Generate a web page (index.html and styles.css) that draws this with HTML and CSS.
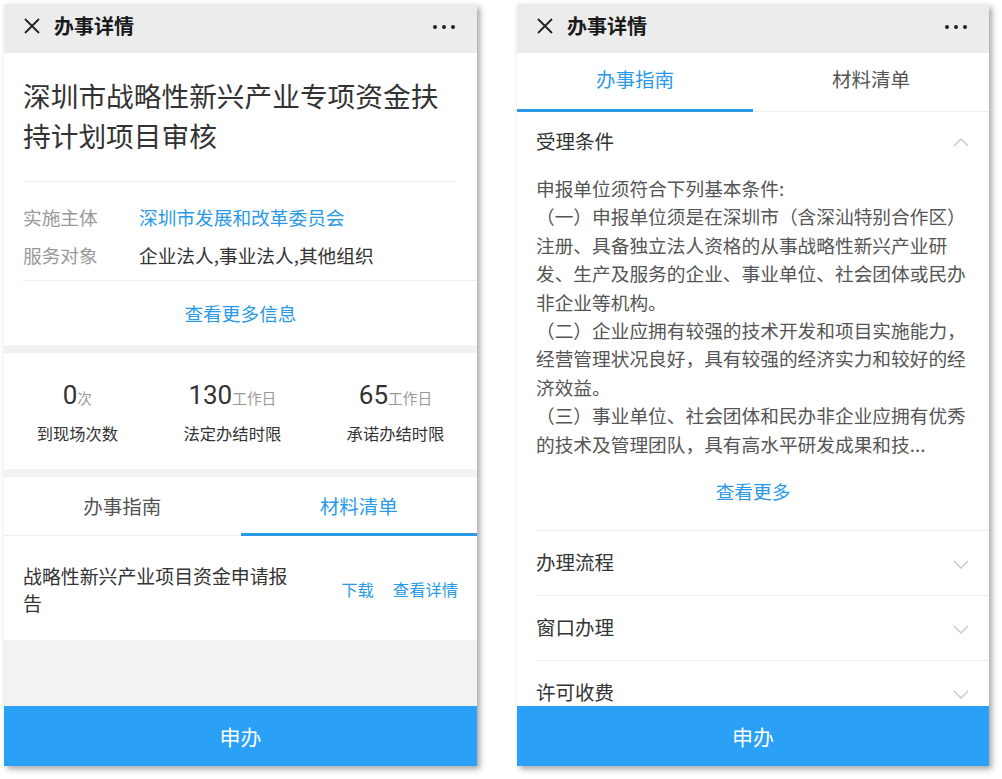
FILE: index.html
```html
<!DOCTYPE html>
<html lang="zh-CN">
<head>
  <meta charset="UTF-8">
  <title>办事详情</title>
  <link rel="stylesheet" href="styles.css">
</head>
<body>
  <div class="screens">

    <!-- Left screen: overview + material list -->
    <div class="phone">
      <header class="topbar">
        <svg class="close-icon" width="16" height="16" viewBox="0 0 16 16"><path d="M1 1 L15 15 M15 1 L1 15" stroke="#222" stroke-width="1.8" fill="none"/></svg>
        <span class="topbar-title">办事详情</span>
        <span class="more-dots"><i></i><i></i><i></i></span>
      </header>

      <div class="content">
        <section class="card">
          <h1 class="item-title">深圳市战略性新兴产业专项资金扶持计划项目审核</h1>
          <div class="info">
            <div class="info-row">
              <span class="info-label">实施主体</span>
              <span class="info-value blue">深圳市发展和改革委员会</span>
            </div>
            <div class="info-row">
              <span class="info-label">服务对象</span>
              <span class="info-value">企业法人,事业法人,其他组织</span>
            </div>
          </div>
          <a class="more-info">查看更多信息</a>
        </section>

        <section class="card stats">
          <div class="stat">
            <div class="stat-num">0<small>次</small></div>
            <div class="stat-label">到现场次数</div>
          </div>
          <div class="stat">
            <div class="stat-num">130<small>工作日</small></div>
            <div class="stat-label">法定办结时限</div>
          </div>
          <div class="stat">
            <div class="stat-num">65<small>工作日</small></div>
            <div class="stat-label">承诺办结时限</div>
          </div>
        </section>

        <section class="card">
          <nav class="tabs">
            <a class="tab">办事指南</a>
            <a class="tab active">材料清单</a>
          </nav>
          <div class="material">
            <span class="material-name">战略性新兴产业项目资金申请报告</span>
            <span class="material-actions">
              <a class="link">下载</a>
              <a class="link">查看详情</a>
            </span>
          </div>
        </section>
      </div>

      <button class="apply-btn">申办</button>
    </div>

    <!-- Right screen: guide -->
    <div class="phone">
      <header class="topbar">
        <svg class="close-icon" width="16" height="16" viewBox="0 0 16 16"><path d="M1 1 L15 15 M15 1 L1 15" stroke="#222" stroke-width="1.8" fill="none"/></svg>
        <span class="topbar-title">办事详情</span>
        <span class="more-dots"><i></i><i></i><i></i></span>
      </header>

      <div class="content white">
        <nav class="tabs">
          <a class="tab active">办事指南</a>
          <a class="tab">材料清单</a>
        </nav>

        <div class="guide open">
          <div class="guide-head">
            <span>受理条件</span>
            <svg class="chevron" width="16" height="10" viewBox="0 0 16 10"><path d="M1 9 L8 2 L15 9" stroke="#c8c8c8" stroke-width="1.4" fill="none"/></svg>
          </div>
          <div class="guide-body">
            <p>申报单位须符合下列基本条件:</p>
            <p>（一）申报单位须是在深圳市（含深汕特别合作区）注册、具备独立法人资格的从事战略性新兴产业研发、生产及服务的企业、事业单位、社会团体或民办非企业等机构。</p>
            <p>（二）企业应拥有较强的技术开发和项目实施能力，经营管理状况良好，具有较强的经济实力和较好的经济效益。</p>
            <p>（三）事业单位、社会团体和民办非企业应拥有优秀的技术及管理团队，具有高水平研发成果和技...</p>
          </div>
          <a class="see-more">查看更多</a>
        </div>

        <div class="guide">
          <div class="guide-head">
            <span>办理流程</span>
            <svg class="chevron" width="16" height="10" viewBox="0 0 16 10"><path d="M1 1 L8 8 L15 1" stroke="#c8c8c8" stroke-width="1.4" fill="none"/></svg>
          </div>
        </div>
        <div class="guide">
          <div class="guide-head">
            <span>窗口办理</span>
            <svg class="chevron" width="16" height="10" viewBox="0 0 16 10"><path d="M1 1 L8 8 L15 1" stroke="#c8c8c8" stroke-width="1.4" fill="none"/></svg>
          </div>
        </div>
        <div class="guide">
          <div class="guide-head">
            <span>许可收费</span>
            <svg class="chevron" width="16" height="10" viewBox="0 0 16 10"><path d="M1 1 L8 8 L15 1" stroke="#c8c8c8" stroke-width="1.4" fill="none"/></svg>
          </div>
        </div>
      </div>

      <button class="apply-btn">申办</button>
    </div>

  </div>
</body>
</html>
```

FILE: styles.css
```css
/* Base */
* {
  margin: 0;
  padding: 0;
  box-sizing: border-box;
}

body {
  font-family: Roboto, "Noto Sans CJK SC", sans-serif;
  background-color: #ffffff;
  color: #333;
  width: 1002px;
  height: 779px;
  overflow: hidden;
}

a {
  text-decoration: none;
}

.link,
.blue {
  color: #2b9ae6;
}

/* Two screens side by side */
.screens {
  display: flex;
  gap: 40px;
  padding: 4px 0 0 4px;
}

.phone {
  width: 473px;
  height: 762px;
  display: flex;
  flex-direction: column;
  background-color: #f2f2f2;
  box-shadow: 3px 3px 6px rgba(0, 0, 0, 0.35);
  overflow: hidden;
}

.phone + .phone {
  width: 472px;
}

/* Top bar */
.topbar {
  height: 49px;
  flex-shrink: 0;
  display: flex;
  align-items: center;
  padding: 0 22px 6px 20px;
  background-color: #ececec;
}

.close-icon {
  margin-right: 14px;
}

.topbar-title {
  flex: 1;
  font-family: "Noto Sans CJK SC", sans-serif;
  font-size: 20px;
  font-weight: 700;
  color: #1a1a1a;
}

.more-dots {
  display: flex;
  gap: 5px;
  padding-top: 2px;
}

.more-dots i {
  width: 4px;
  height: 4px;
  border-radius: 50%;
  background-color: #222;
}

/* Content area */
.content {
  flex: 1;
  overflow: hidden;
  display: flex;
  flex-direction: column;
  gap: 8px;
}

.content.white {
  background-color: #ffffff;
  gap: 0;
}

.card {
  background-color: #ffffff;
}

.item-title {
  font-family: "Noto Sans CJK SC", sans-serif;
  font-size: 27.7px;
  font-weight: 400;
  line-height: 40px;
  color: #333;
  margin: 0 20px 0 19px;
  padding: 22px 0 26px;
  border-bottom: 1px solid #eeeeee;
}

.info {
  margin-left: 19px;
  padding: 16px 0 6px;
  border-bottom: 1px solid #eeeeee;
}

.info-row {
  display: flex;
  line-height: 38px;
  font-size: 18.7px;
  font-family: "Noto Sans CJK SC", sans-serif;
}

.info-label {
  width: 116px;
  color: #999;
}

.info-value {
  color: #333;
}

.info-value.blue {
  color: #2b9ae6;
}

.more-info {
  display: block;
  text-align: center;
  line-height: 64px;
  font-size: 18.7px;
  color: #2b9ae6;
  font-family: "Noto Sans CJK SC", sans-serif;
}

/* Stats */
.stats {
  height: 116px;
  display: flex;
  justify-content: space-around;
  padding-top: 24px;
}

.stat {
  text-align: center;
}

.stat-num {
  font-size: 26px;
  line-height: 36px;
  color: #333;
}

.stat-num small {
  font-family: "Noto Sans CJK SC", sans-serif;
  font-size: 14.7px;
  color: #999;
}

.stat-label {
  margin-top: 4px;
  font-family: "Noto Sans CJK SC", sans-serif;
  font-size: 16.3px;
  line-height: 26px;
  color: #333;
}

/* Tabs */
.tabs {
  display: flex;
  height: 59px;
  flex-shrink: 0;
  border-bottom: 1px solid #eeeeee;
  background-color: #ffffff;
}

.tab {
  flex: 1;
  display: flex;
  align-items: center;
  justify-content: center;
  font-family: "Noto Sans CJK SC", sans-serif;
  font-size: 19.5px;
  color: #555;
  border-bottom: 3px solid transparent;
  margin-bottom: -1px;
}

.content.white .tab {
  padding-bottom: 6px;
}

.tab.active {
  color: #2b9ae6;
  border-bottom-color: #2b9ae6;
}

/* Material list */
.material {
  display: flex;
  align-items: center;
  justify-content: space-between;
  padding: 26px 19px 24px 19px;
  font-family: "Noto Sans CJK SC", sans-serif;
}

.material-name {
  width: 272px;
  font-size: 18.9px;
  line-height: 27px;
  color: #333;
}

.material-actions {
  display: flex;
  gap: 19px;
  font-size: 16.3px;
}

/* Apply button */
.apply-btn {
  height: 60px;
  flex-shrink: 0;
  border: none;
  background-color: #2aa1f6;
  color: #ffffff;
  font-family: "Noto Sans CJK SC", sans-serif;
  font-size: 21px;
}

/* Guide accordion */
.guide {
  margin-left: 19px;
  border-bottom: 1px solid #eeeeee;
  font-family: "Noto Sans CJK SC", sans-serif;
}

.guide-head {
  height: 64px;
  display: flex;
  align-items: center;
  justify-content: space-between;
  padding: 0 20px 4px 0;
  font-size: 19.5px;
  color: #333;
}

.guide-head .chevron {
  margin-top: 8px;
}

.guide.open .guide-head {
  height: 62px;
  padding-bottom: 6px;
}

.guide.open .guide-head .chevron {
  margin-top: 4px;
}

.guide-body {
  width: 434px;
  font-size: 18.7px;
  line-height: 28.4px;
  color: #555;
}

.see-more {
  display: block;
  width: 434px;
  text-align: center;
  margin-top: 19px;
  padding-bottom: 25px;
  line-height: 28px;
  font-size: 18.7px;
  color: #2b9ae6;
}
```
